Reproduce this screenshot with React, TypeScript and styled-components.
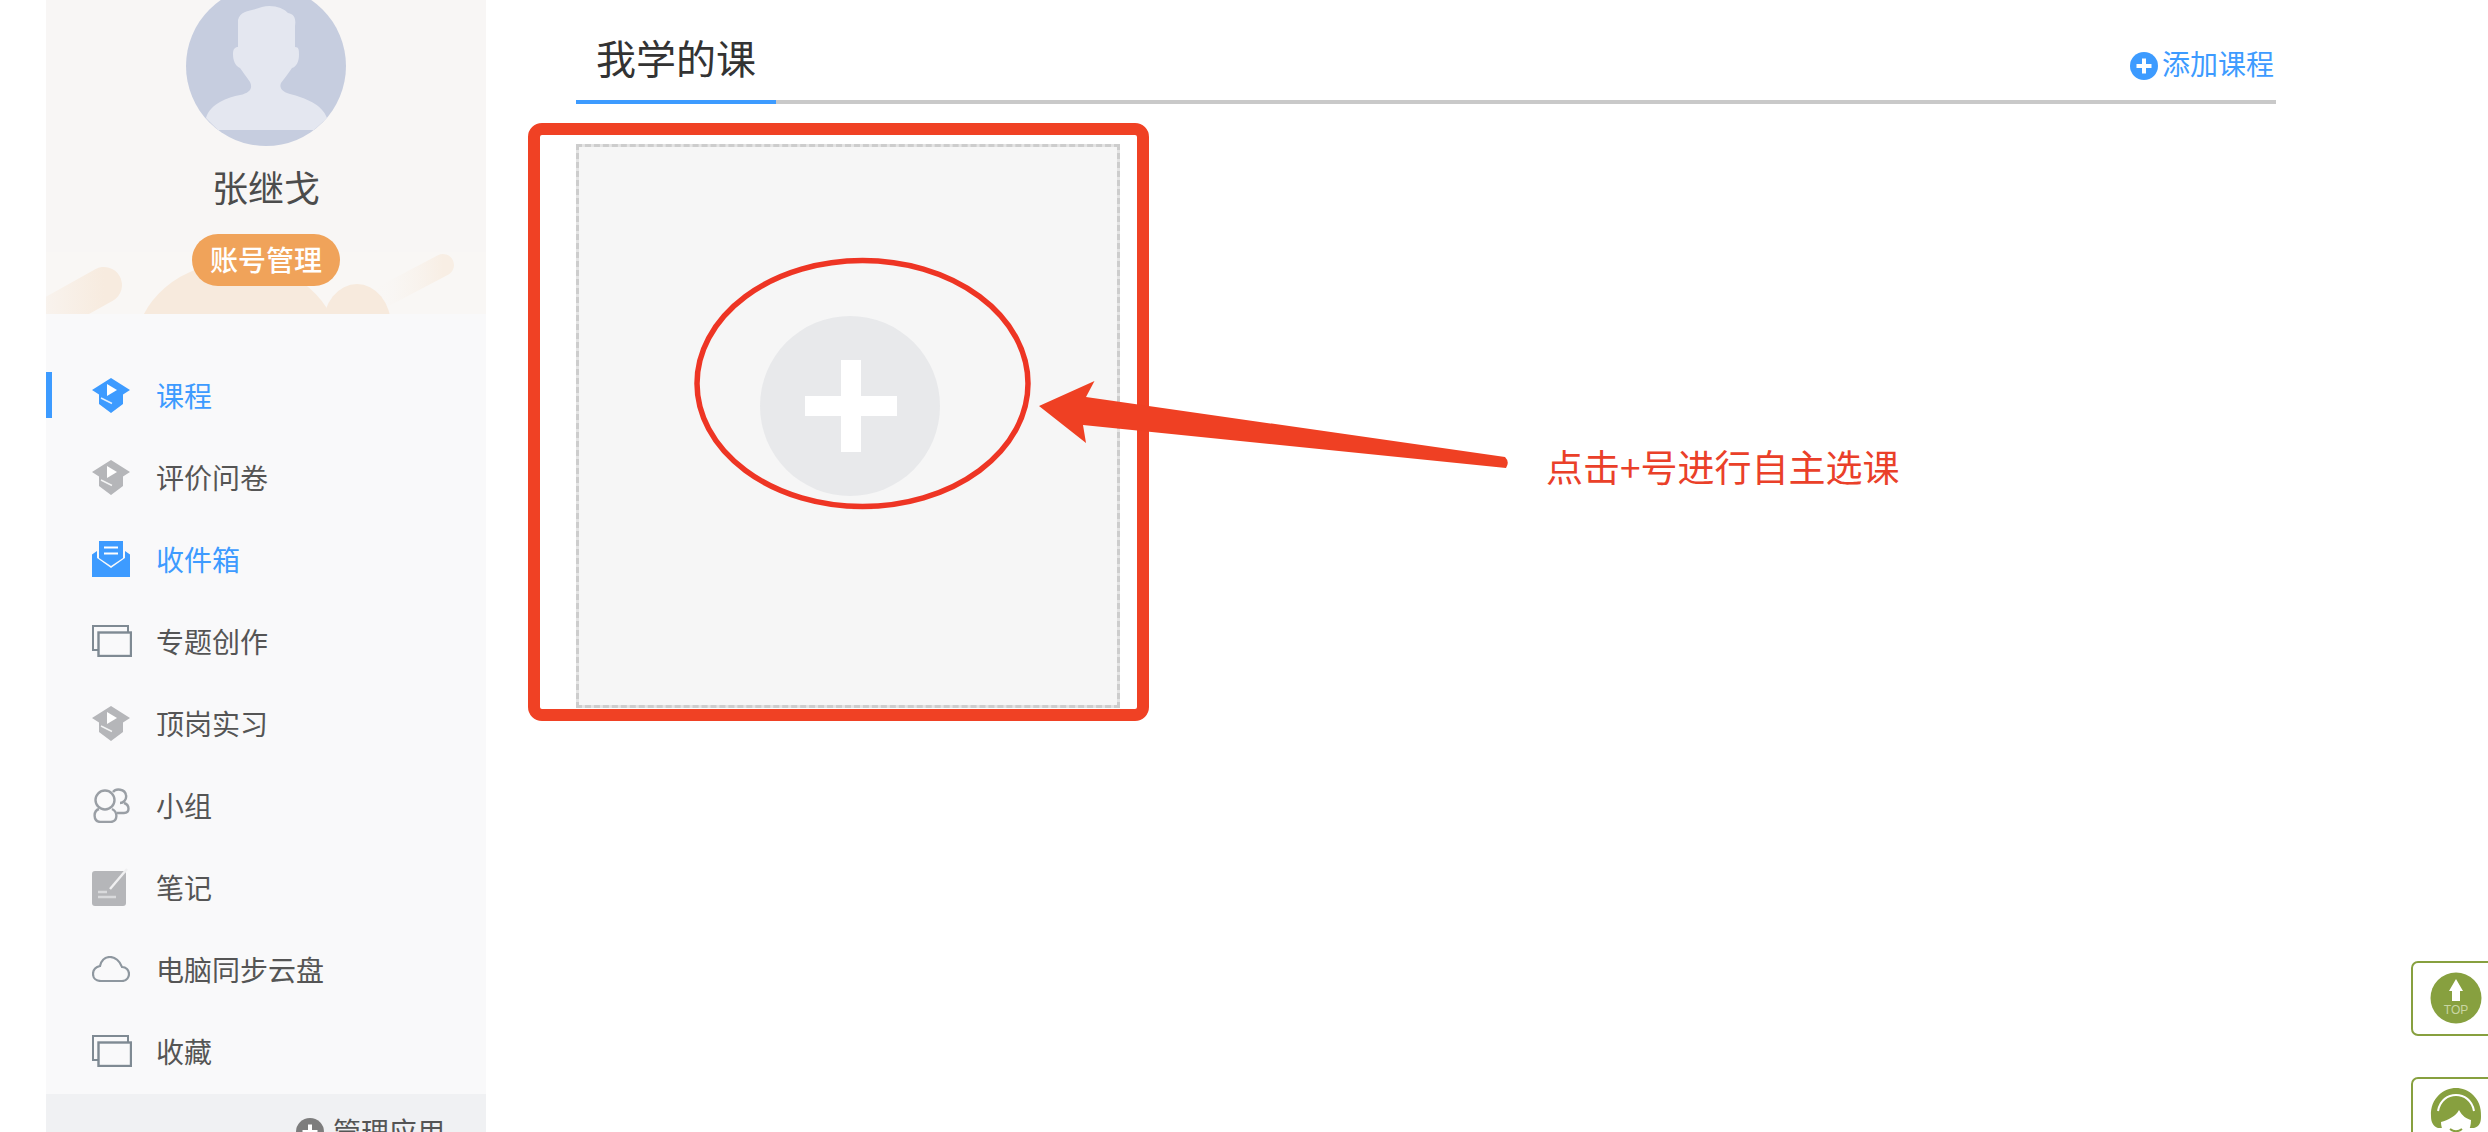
import React from "react";
import styled, { createGlobalStyle } from "styled-components";

const Global = createGlobalStyle`
  html, body { margin: 0; padding: 0; background: #fff; }
  * { box-sizing: border-box; }
  body { font-family: "Noto Sans CJK SC", "Noto Sans", sans-serif; }
`;

const Page = styled.div`
  position: relative;
  width: 2488px;
  height: 1132px;
  overflow: hidden;
  display: flex;
  background: #fff;
`;

const Sidebar = styled.aside`
  margin-left: 46px;
  width: 440px;
  height: 1132px;
  flex: none;
  display: flex;
  flex-direction: column;
  background: #f9f9fa;
`;

const Profile = styled.div`
  position: relative;
  height: 314px;
  flex: none;
  overflow: hidden;
  display: flex;
  flex-direction: column;
  align-items: center;
  background: #f8f6f5;
`;

const Decor = styled.svg`
  position: absolute;
  left: 0;
  bottom: 0;
`;

const Avatar = styled.svg`
  position: relative;
  display: block;
  margin-top: -14px;
  flex: none;
`;

const Name = styled.div`
  position: relative;
  margin-top: 15px;
  font-size: 36px;
  line-height: 50px;
  color: #4c4c4c;
`;

const AccountButton = styled.div`
  position: relative;
  margin-top: 23px;
  width: 148px;
  height: 52px;
  border-radius: 26px;
  background: #f0a35a;
  color: #fff;
  font-size: 28px;
  line-height: 50px;
  text-align: center;
  font-weight: 500;
`;

const Nav = styled.nav`
  flex: 1;
  display: flex;
  flex-direction: column;
  gap: 36px;
  padding-top: 58px;
`;

const NavItem = styled.div<{ $active?: boolean; $bar?: boolean }>`
  height: 46px;
  display: flex;
  align-items: center;
  border-left: 6px solid ${(p) => (p.$bar ? "#3d9bff" : "transparent")};
  padding-left: 40px;
  font-size: 28px;
  color: ${(p) => (p.$active ? "#3d9bff" : "#555")};
`;

const IconSlot = styled.span`
  width: 40px;
  height: 40px;
  margin-right: 24px;
  flex: none;
  display: flex;
  align-items: center;
  justify-content: flex-start;
`;

const ManageBar = styled.div`
  height: 38px;
  flex: none;
  background: #f0f1f3;
  display: flex;
  justify-content: flex-end;
  align-items: flex-start;
  gap: 9px;
  padding: 18px 41px 0 0;
  font-size: 28px;
  line-height: 38px;
  color: #555;
`;

const Main = styled.main`
  margin-left: 90px;
  width: 1700px;
  flex: none;
`;

const Tabs = styled.div`
  height: 104px;
  display: flex;
  justify-content: space-between;
  align-items: flex-start;
  border-bottom: 4px solid #c9c9c9;
`;

const Tab = styled.div`
  width: 200px;
  height: 104px;
  padding: 27px 0 0 20px;
  border-bottom: 4px solid #3d9bff;
  font-size: 40px;
  line-height: 60px;
  color: #333;
`;

const AddCourse = styled.div`
  display: flex;
  align-items: flex-start;
  gap: 4px;
  padding: 43px 2px 0 0;
  font-size: 28px;
  line-height: 40px;
  color: #3d9bff;
`;

const BadgeSlot = styled.span<{ $top: number }>`
  display: block;
  flex: none;
  height: 28px;
  margin-top: ${(p) => p.$top}px;
  svg { display: block; }
`;

const Card = styled.div`
  margin-top: 40px;
  width: 544px;
  height: 564px;
  border: 3px dashed #cdcdcd;
  background:
    linear-gradient(#f6f6f6, #f6f6f6) padding-box,
    linear-gradient(#e4e4e4, #e4e4e4) border-box;
  display: flex;
  align-items: center;
  justify-content: center;
`;

const AddCircle = styled.div`
  position: relative;
  width: 180px;
  height: 180px;
  margin: 0 0 40px 3px;
  border-radius: 50%;
  background: #e8e9eb;
  &::before, &::after {
    content: "";
    position: absolute;
    background: #fff;
  }
  &::before { left: 45px; top: 80px; width: 92px; height: 20px; }
  &::after { left: 81px; top: 44px; width: 20px; height: 92px; }
`;

const RedBox = styled.div`
  position: absolute;
  left: 528px;
  top: 123px;
  width: 621px;
  height: 598px;
  border: 12px solid #f04124;
  border-radius: 14px;
`;

const Overlay = styled.svg`
  position: absolute;
  left: 0;
  top: 0;
  pointer-events: none;
`;

const Note = styled.div`
  position: absolute;
  left: 1546px;
  top: 440px;
  font-size: 37px;
  line-height: 52px;
  color: #ea4029;
  white-space: nowrap;
`;

const FloatBox = styled.div<{ $top: number }>`
  position: absolute;
  left: 2411px;
  top: ${(p) => p.$top}px;
  width: 120px;
  height: 75px;
  border: 2px solid #87a03f;
  border-radius: 7px;
  background: #fff;
  padding: 9px 0 0 17px;
`;

const CapIcon = ({ color }: { color: string }) => (
  <svg width="38" height="35" viewBox="0 0 38 35">
    <path d="M19 0 L38 12 L31 16.5 V26 L19 35 L7 26 V16.5 L0 12 Z" fill={color} />
    <path d="M15 6 V18 L25 12 Z" fill="#fff" />
    <path d="M9 20 L20 25.5" fill="none" stroke="#fff" strokeWidth="1.4" opacity="0.85" />
  </svg>
);

const MailIcon = () => (
  <svg width="38" height="36" viewBox="0 0 38 36">
    <path d="M7 0 H31 V17 L19 25 L7 17 Z" fill="#3d9bff" />
    <path d="M12 6.5 H26 M12 12.5 H26" stroke="#fff" strokeWidth="2" />
    <path d="M5 10 V17 L19 27 L33 17 V10 L38 13.5 V36 H0 V13.5 Z" fill="#3d9bff" />
  </svg>
);

const FramesIcon = () => (
  <svg width="40" height="32" viewBox="0 0 40 32">
    <path d="M6 25 H1 V1 H36 V7" fill="none" stroke="#7f8a93" strokeWidth="2" />
    <rect x="6.5" y="7.5" width="32.5" height="23.5" fill="none" stroke="#7f8a93" strokeWidth="2.4" />
  </svg>
);

const GroupIcon = () => (
  <svg width="38" height="35" viewBox="0 0 38 35" fill="none" stroke="#9a9fa5" strokeWidth="2.4">
    <circle cx="13" cy="12" r="9.5" />
    <path d="M7 21 C1 23 1 33 8 34 H19 C26 33 26 24 20 21" />
    <path d="M21 4 C24 0 33 1 34 7 C35 12 31 15 28 15" />
    <path d="M32 15 C38 17 38 25 32 25 H25" />
  </svg>
);

const NoteIcon = () => (
  <svg width="36" height="38" viewBox="0 0 36 38">
    <rect x="0" y="3" width="34" height="35" rx="3" fill="#b5b6b9" />
    <path d="M18 21 L35 1" stroke="#f0f0f1" strokeWidth="2.4" />
    <path d="M6 24 H15 M6 29 H24" stroke="#d9dadc" strokeWidth="2.4" />
  </svg>
);

const CloudIcon = () => (
  <svg width="38" height="26" viewBox="0 0 38 26">
    <path
      d="M9 25 H30 C35 25 37 21 37 18 C37 14 34 11 30 11 C28 5 23 1 18 1 C12 1 9 6 8 10 C4 11 1 14 1 18 C1 22 4 25 9 25 Z"
      fill="none"
      stroke="#8e979f"
      strokeWidth="2.2"
    />
  </svg>
);

const PlusBadge = ({ size, color }: { size: number; color: string }) => (
  <svg width={size} height={size} viewBox="0 0 28 28">
    <circle cx="14" cy="14" r="14" fill={color} />
    <path d="M14 6.5 V21.5 M6.5 14 H21.5" stroke="#fff" strokeWidth="4" />
  </svg>
);

const TopIcon = () => (
  <svg width="52" height="52" viewBox="0 0 52 52">
    <circle cx="26" cy="26" r="25.5" fill="#87a03f" />
    <path d="M26 7 L33 19 H30 V29 H22 V19 H19 Z" fill="#fff" />
    <text x="26" y="42" textAnchor="middle" fontSize="12" fontFamily="Liberation Sans, sans-serif" fill="#c9d6a3">
      TOP
    </text>
  </svg>
);

const AgentIcon = () => (
  <svg width="52" height="62" viewBox="0 0 52 62">
    <path d="M1 28 C0 10 14 0 26 0 C38 0 52 10 51 28 C51 34 50 38 44 40 L8 40 C3 38 1 34 1 28 Z" fill="#87a03f" />
    <path d="M8 23 C10 12 18 7 26 7 C34 7 42 12 44 23" fill="none" stroke="#fff" strokeWidth="2" />
    <path d="M11 34 C18 32 26 28 29 22 C32 28 37 31 41 32 C41 44 34 52 26 52 C18 52 11 44 11 34 Z" fill="#fff" />
    <path d="M20 41 C24 44 28 44 32 41" fill="none" stroke="#87a03f" strokeWidth="2" />
  </svg>
);

const items: { label: string; icon: React.ReactNode; active?: boolean; bar?: boolean }[] = [
  { label: "课程", icon: <CapIcon color="#3d9bff" />, active: true, bar: true },
  { label: "评价问卷", icon: <CapIcon color="#b5b6b9" /> },
  { label: "收件箱", icon: <MailIcon />, active: true },
  { label: "专题创作", icon: <FramesIcon /> },
  { label: "顶岗实习", icon: <CapIcon color="#b5b6b9" /> },
  { label: "小组", icon: <GroupIcon /> },
  { label: "笔记", icon: <NoteIcon /> },
  { label: "电脑同步云盘", icon: <CloudIcon /> },
  { label: "收藏", icon: <FramesIcon /> },
];

export default function App() {
  return (
    <Page>
      <Global />
      <Sidebar>
        <Profile>
          <Decor width="440" height="62" viewBox="0 252 440 62">
            <defs>
              <linearGradient id="fadeL" x1="0" x2="1" y1="0" y2="0">
                <stop offset="0" stopColor="#f7ebdf" stopOpacity="0.25" />
                <stop offset="1" stopColor="#f7ebdf" />
              </linearGradient>
              <linearGradient id="fadeR" x1="0" x2="1" y1="0" y2="0">
                <stop offset="0" stopColor="#f8f2ec" stopOpacity="0.05" />
                <stop offset="1" stopColor="#f8eee4" />
              </linearGradient>
            </defs>
            <rect x="0" y="252" width="440" height="62" fill="#f9f7f5" />
            <path d="M-10 323 L58 285" stroke="url(#fadeL)" strokeWidth="36" strokeLinecap="round" fill="none" />
            <path d="M340 295 L397 265" stroke="url(#fadeR)" strokeWidth="22" strokeLinecap="round" fill="none" />
            <ellipse cx="191" cy="350" rx="102" ry="88" fill="#f7eadd" />
            <ellipse cx="311" cy="326" rx="34" ry="42" fill="#f7eadd" />
          </Decor>
          <Avatar width="160" height="160" viewBox="186 -14 160 160">
            <defs>
              <clipPath id="avatarClip">
                <circle cx="266" cy="66" r="80" />
              </clipPath>
            </defs>
            <circle cx="266" cy="66" r="80" fill="#c6cddf" />
            <path
              clipPath="url(#avatarClip)"
              d="M238 20 C240 10 252 11 262 7 C272 4 284 8 288 13 C295 14 296 20 295 26 L295 47 C299 47 299 50 299 55 C299 62 296 67 292 68 C288 74 284 79 281 83 C279 88 282 92 290 94 C305 98 322 104 327 118 L314 130 L218 130 L206 118 C210 104 228 97 240 95 C250 93 253 88 250 82 C246 76 242 71 240 68 C235 66 233 60 233 54 C233 49 235 47 238 47 Z"
              fill="#e4e7f0"
            />
          </Avatar>
          <Name>张继戈</Name>
          <AccountButton>账号管理</AccountButton>
        </Profile>
        <Nav>
          {items.map((it) => (
            <NavItem key={it.label} $active={it.active} $bar={it.bar}>
              <IconSlot>{it.icon}</IconSlot>
              {it.label}
            </NavItem>
          ))}
        </Nav>
        <ManageBar>
          <BadgeSlot $top={6}>
            <PlusBadge size={28} color="#7d7d7d" />
          </BadgeSlot>
          管理应用
        </ManageBar>
      </Sidebar>
      <Main>
        <Tabs>
          <Tab>我学的课</Tab>
          <AddCourse>
            <BadgeSlot $top={9}>
              <PlusBadge size={28} color="#3d9bff" />
            </BadgeSlot>
            添加课程
          </AddCourse>
        </Tabs>
        <Card>
          <AddCircle />
        </Card>
      </Main>

      <RedBox />
      <Overlay width="2488" height="1132" viewBox="0 0 2488 1132">
        <ellipse cx="862.5" cy="383.5" rx="165.5" ry="123" fill="none" stroke="#ee3524" strokeWidth="5.5" />
        <path
          d="M1039 406 L1094.5 381 L1086 397 L1505 457 Q1510 462 1506 468 L1083 425 L1086 443 Z"
          fill="#ef4023"
        />
      </Overlay>
      <Note>点击+号进行自主选课</Note>

      <FloatBox $top={961}>
        <TopIcon />
      </FloatBox>
      <FloatBox $top={1077}>
        <AgentIcon />
      </FloatBox>
    </Page>
  );
}
